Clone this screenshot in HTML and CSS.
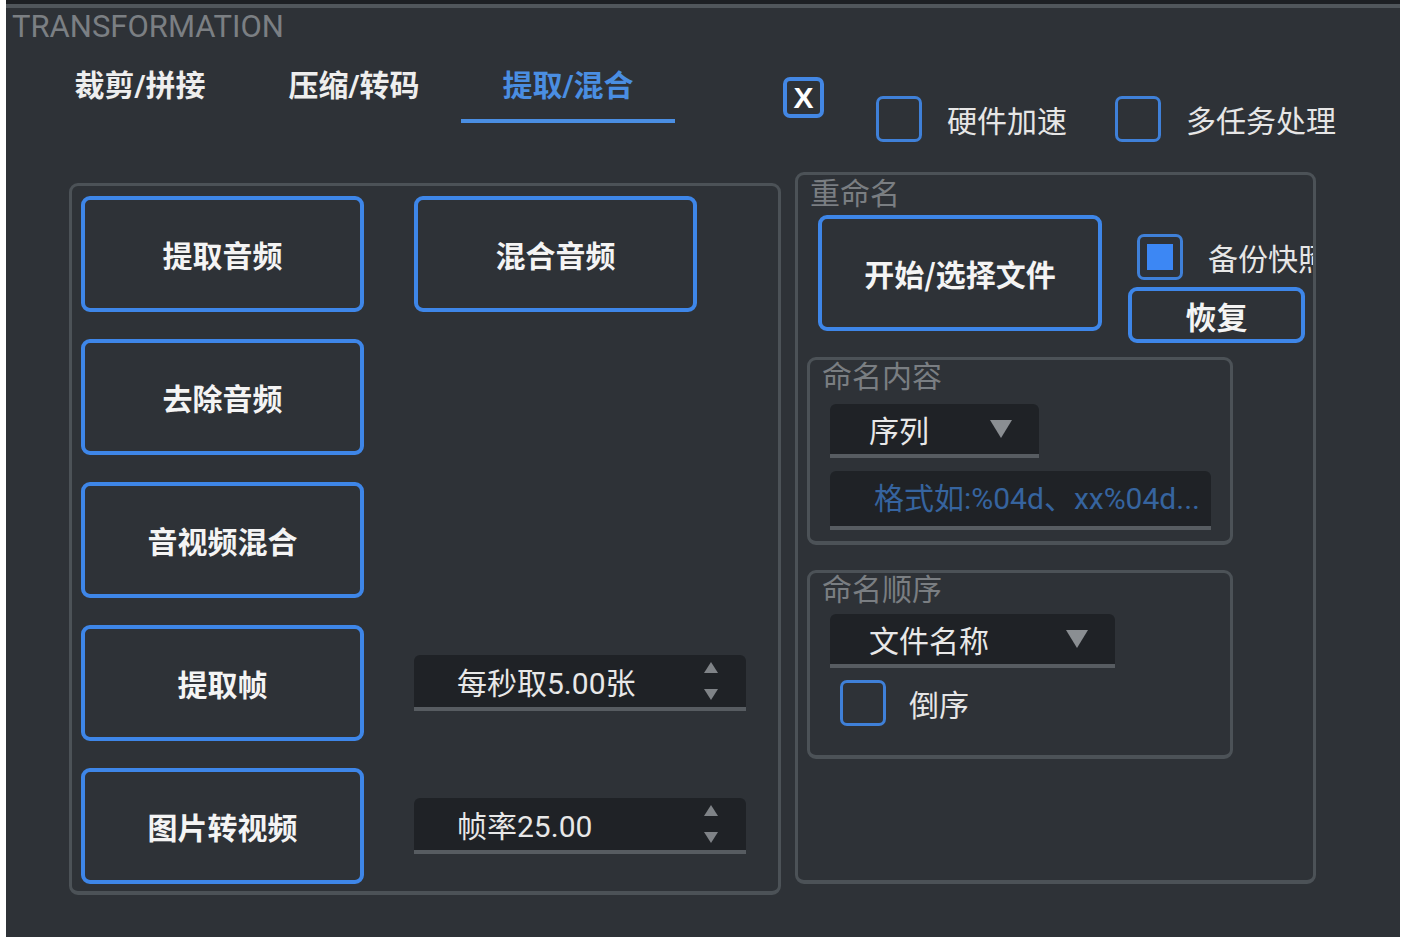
FILE: index.html
```html
<!DOCTYPE html>
<html lang="zh">
<head>
    <meta charset="UTF-8">
    <title>Transformation</title>
    <link rel="stylesheet" href="styles.css">
</head>
<body>

<div class="window">
    <div class="title">TRANSFORMATION</div>

    <div class="top-row">
        <div class="tabs">
            <div class="tab">裁剪/拼接</div>
            <div class="tab">压缩/转码</div>
            <div class="tab active">提取/混合</div>
        </div>
        <div class="close-box">X</div>
        <div class="check hw">
            <span class="box"></span>
            <span>硬件加速</span>
        </div>
        <div class="check multi">
            <span class="box"></span>
            <span>多任务处理</span>
        </div>
    </div>

    <div class="main">
        <div class="group actions">
            <button class="btn">提取音频</button>
            <button class="btn">混合音频</button>
            <button class="btn">去除音频</button>
            <div></div>
            <button class="btn">音视频混合</button>
            <div></div>
            <button class="btn">提取帧</button>
            <div class="spin">
                <span>每秒取5.00张</span>
                <span class="arrows"><i class="up"></i><i class="down"></i></span>
            </div>
            <button class="btn">图片转视频</button>
            <div class="spin">
                <span>帧率25.00</span>
                <span class="arrows"><i class="up"></i><i class="down"></i></span>
            </div>
        </div>

        <div class="group rename">
            <div class="group-title">重命名</div>
            <div class="rename-row">
                <button class="btn start">开始/选择文件</button>
                <div class="side">
                    <div class="check backup">
                        <span class="box checked"></span>
                        <span>备份快照</span>
                    </div>
                    <button class="btn restore">恢复</button>
                </div>
            </div>

            <div class="group sub">
                <div class="group-title">命名内容</div>
                <div class="combo short">
                    <span>序列</span>
                    <i class="tri"></i>
                </div>
                <div class="field">格式如:%04d、xx%04d...</div>
            </div>

            <div class="group sub order">
                <div class="group-title">命名顺序</div>
                <div class="combo wide">
                    <span>文件名称</span>
                    <i class="tri"></i>
                </div>
                <div class="check reverse">
                    <span class="box"></span>
                    <span>倒序</span>
                </div>
            </div>
        </div>
    </div>
</div>

</body>
</html>
```

FILE: styles.css
```css
body {
    margin: 0;
    background-color: #ffffff;
    font-family: Roboto, "Noto Sans CJK SC", sans-serif;
    color: #eeeeee;
}
.window {
    margin-left: 6px;
    width: 1394px;
    height: 937px;
    box-sizing: border-box;
    background-color: #2e3237;
    border-top: 4px solid #1d2024;
    box-shadow: inset 0 4px 0 #50565b;
    overflow: hidden;
}
.title {
    padding: 5px 0 0 6px;
    font-size: 31px;
    line-height: 36px;
    color: #7b7f83;
}

/* top row: tabs + checkboxes */
.top-row {
    display: flex;
    align-items: flex-start;
    margin-top: 9px;
}
.tabs {
    display: flex;
    margin-left: 27px;
}
.tab {
    width: 214px;
    padding: 12px 0 13px;
    line-height: 40px;
    font-size: 30px;
    font-weight: bold;
    text-align: center;
    border-bottom: 4px solid transparent;
}
.tab.active {
    color: #4a8ee2;
    border-bottom-color: #4a8ee2;
}
.close-box {
    width: 41px;
    height: 41px;
    box-sizing: border-box;
    margin: 23px 0 0 108px;
    border: 4px solid #4387e4;
    border-radius: 7px;
    font-family: "Liberation Sans", sans-serif;
    font-weight: bold;
    font-size: 30px;
    line-height: 33px;
    text-align: center;
    color: #ffffff;
}
.check {
    display: flex;
    align-items: center;
    gap: 25px;
    font-size: 30px;
    color: #e6e6e6;
    white-space: nowrap;
}
.box {
    flex: none;
    width: 46px;
    height: 46px;
    box-sizing: border-box;
    border: 3px solid #3f80d8;
    border-radius: 7px;
    position: relative;
}
.box.checked::after {
    content: "";
    position: absolute;
    left: 7px;
    top: 7px;
    width: 26px;
    height: 26px;
    background-color: #3c87f4;
}
.check.hw {
    margin: 42px 0 0 52px;
}
.check.multi {
    margin: 42px 0 0 48px;
}

/* main area */
.main {
    display: flex;
    align-items: flex-start;
    margin-top: 30px;
}
.group {
    border: 3px solid #4c5257;
    border-bottom-width: 4px;
    border-radius: 9px;
}
.group-title {
    font-size: 30px;
    line-height: 34px;
    color: #7a7e82;
    padding-left: 12px;
}
.actions {
    margin: 11px 0 0 63px;
    padding: 10px 32px 7px 9px;
    display: grid;
    grid-template-columns: 283px 332px;
    grid-auto-rows: 116px;
    column-gap: 50px;
    row-gap: 27px;
    align-items: center;
}
.btn {
    flex: none;
    box-sizing: border-box;
    width: 283px;
    height: 116px;
    background-color: transparent;
    border: 4px solid #3e86e8;
    border-radius: 9px;
    color: #f4f4f4;
    font-family: "Noto Sans CJK SC", sans-serif;
    font-weight: bold;
    font-size: 30px;
    padding: 0;
}
.spin {
    height: 52px;
    background-color: #1f2226;
    border-radius: 6px 6px 0 0;
    border-bottom: 4px solid #575c61;
    display: flex;
    align-items: center;
    justify-content: space-between;
    padding: 0 28px 0 43px;
    font-size: 30px;
    color: #e8e8e8;
}
.arrows {
    display: flex;
    flex-direction: column;
    gap: 16px;
}
.arrows i {
    width: 0;
    height: 0;
    border-left: 7px solid transparent;
    border-right: 7px solid transparent;
}
.arrows .up {
    border-bottom: 11px solid #7f8387;
}
.arrows .down {
    border-top: 11px solid #7f8387;
}

/* rename panel */
.rename {
    flex: none;
    margin-left: 14px;
    width: 521px;
    height: 712px;
    box-sizing: border-box;
    padding: 2px 0 0 0;
    overflow: hidden;
}
.rename-row {
    display: flex;
    margin: 4px 0 0 20px;
}
.btn.start {
    width: 284px;
}
.side {
    flex: none;
    margin-left: 26px;
    display: flex;
    flex-direction: column;
}
.check.backup {
    margin: 19px 0 0 9px;
}
.btn.restore {
    width: 177px;
    height: 56px;
    margin-top: 7px;
    font-size: 31px;
}
.group.sub {
    margin: 14px 0 0 9px;
    width: 426px;
    height: 188px;
    box-sizing: border-box;
    padding: 0 0 0 20px;
}
.group.sub .group-title {
    padding-left: 12px;
    margin-left: -20px;
}
.group.sub.order {
    margin-top: 25px;
    height: 189px;
}
.combo {
    margin-top: 10px;
    height: 54px;
    background-color: #1f2226;
    border-radius: 6px 6px 0 0;
    border-bottom: 4px solid #575c61;
    display: flex;
    align-items: center;
    justify-content: space-between;
    padding: 0 27px 0 39px;
    font-size: 30px;
    color: #e8e8e8;
}
.combo.short {
    width: 209px;
    box-sizing: border-box;
}
.combo.wide {
    width: 285px;
    box-sizing: border-box;
    margin-top: 7px;
}
.tri {
    width: 0;
    height: 0;
    border-left: 11px solid transparent;
    border-right: 11px solid transparent;
    border-top: 18px solid #8a8e92;
}
.field {
    margin-top: 13px;
    width: 381px;
    height: 59px;
    box-sizing: border-box;
    background-color: #1f2226;
    border-radius: 6px 6px 0 0;
    border-bottom: 4px solid #575c61;
    padding-left: 44px;
    font-size: 30px;
    line-height: 55px;
    color: #36649f;
    white-space: nowrap;
    overflow: hidden;
}
.check.reverse {
    margin: 12px 0 0 10px;
    gap: 23px;
}
```
